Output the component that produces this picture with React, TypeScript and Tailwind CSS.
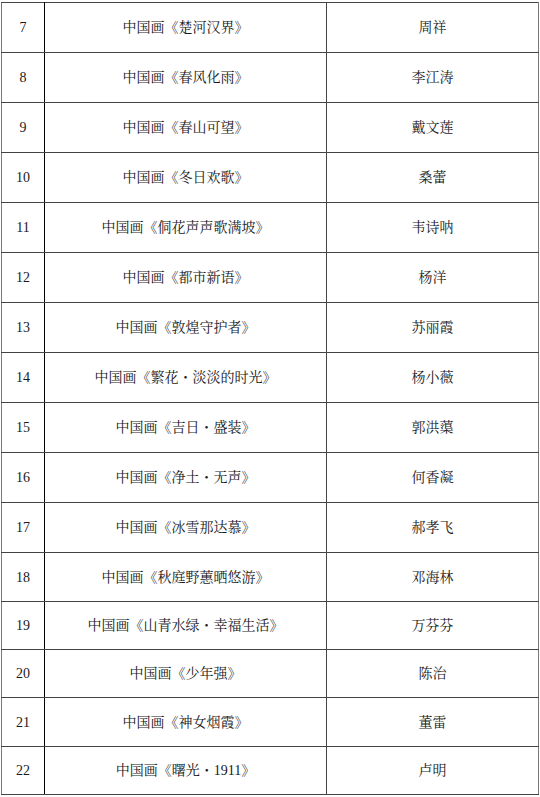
import React from "react";

const rows: [string, string, string, number][] = [
  ["7", "中国画《楚河汉界》", "周祥", 50],
  ["8", "中国画《春风化雨》", "李江涛", 50],
  ["9", "中国画《春山可望》", "戴文莲", 50],
  ["10", "中国画《冬日欢歌》", "桑蕾", 50],
  ["11", "中国画《侗花声声歌满坡》", "韦诗呐", 50],
  ["12", "中国画《都市新语》", "杨洋", 50],
  ["13", "中国画《敦煌守护者》", "苏丽霞", 50],
  ["14", "中国画《繁花・淡淡的时光》", "杨小薇", 50],
  ["15", "中国画《吉日・盛装》", "郭洪蕖", 50],
  ["16", "中国画《净土・无声》", "何香凝", 50],
  ["17", "中国画《冰雪那达慕》", "郝孝飞", 50],
  ["18", "中国画《秋庭野蕙晒悠游》", "邓海林", 49],
  ["19", "中国画《山青水绿・幸福生活》", "万芬芬", 48],
  ["20", "中国画《少年强》", "陈治", 48],
  ["21", "中国画《神女烟霞》", "董雷", 49],
  ["22", "中国画《曙光・1911》", "卢明", 48],
];

export default function App() {
  return (
    <div className="w-[540px] h-[797px] bg-white pt-[2px] pl-[1px] overflow-hidden">
      <table
        className="table-fixed border-collapse w-[537px] text-[14px] text-[#1a1a1a]"
        style={{ fontFamily: '"Liberation Serif", "Noto Serif CJK SC", "Noto Sans CJK SC", serif' }}
      >
        <colgroup>
          <col className="w-[43px]" />
          <col className="w-[282px]" />
          <col className="w-[212px]" />
        </colgroup>
        <tbody>
          {rows.map(([n, t, a, h]) => (
            <tr key={n} style={{ height: h }}>
              <td className="border border-l-[#777] border-y-[#444] border-r-[#000] text-center p-0 align-middle">{n}</td>
              <td className="border border-y-[#444] border-r-[#444] text-center p-0 align-middle">{t}</td>
              <td className="border border-y-[#444] border-r-[#777] text-center p-0 align-middle">{a}</td>
            </tr>
          ))}
        </tbody>
      </table>
    </div>
  );
}
